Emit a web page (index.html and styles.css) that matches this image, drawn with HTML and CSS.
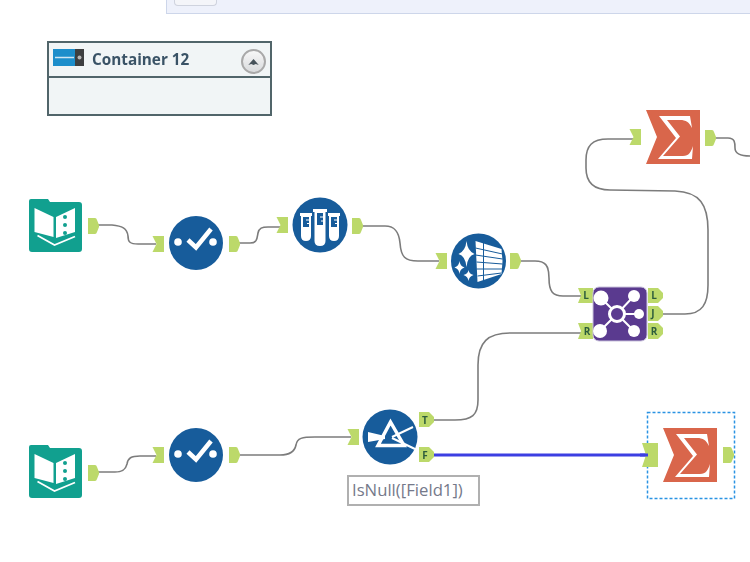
FILE: index.html
```html
<!DOCTYPE html>
<html lang="en">
<head>
<meta charset="utf-8">
<title>Workflow canvas</title>
<link rel="stylesheet" href="styles.css">
</head>
<body>
<div class="toolbar"><div class="toolbar-btn"></div></div>
<main class="canvas">
  <svg class="diagram" width="750" height="548" viewBox="0 14 750 548" xmlns="http://www.w3.org/2000/svg">
    <defs>
      <symbol id="pin" width="11" height="16" viewBox="0 0 11 16" overflow="visible"><path class="port" d="M-0.500,0H11V16H-0.500L3.500,8Z"/></symbol>
      <symbol id="pout" width="11" height="16" viewBox="0 0 11 16" overflow="visible"><path class="port" d="M0,0H7Q8.500,0 9,2L11,7V9L9,14Q8.500,16 7,16H0Z"/></symbol>
      <symbol id="book" width="53" height="53" viewBox="0 0 53 53">
        <path class="teal" d="M2,0H19L21,3H50Q53,3 53,6V50Q53,53 50,53H3Q0,53 0,50V2Q0,0 2,0Z"/>
        <path class="white" d="M5.500,9L24.500,18V38L5.500,33ZM27,18L46,9V33L27,39Z"/>
        <path class="book-line" d="M8.500,36.500L25.500,46L46,37.500"/>
        <circle class="teal" cx="36" cy="18" r="2"/><circle class="teal" cx="36" cy="26" r="2"/><circle class="teal" cx="36" cy="34" r="2"/>
      </symbol>
      <symbol id="select" width="54" height="54" viewBox="-27 -27 54 54">
        <circle class="blue" r="27"/>
        <circle class="white" cx="-18" cy="-1" r="3.800"/><circle class="white" cx="17" cy="-1" r="3.800"/>
        <path class="check" d="M-8,-3L0,4.500L15,-14"/>
      </symbol>
      <symbol id="sum" width="54" height="54" viewBox="0 0 54 54">
        <path class="orange" d="M0,0H54V54H0L11,27Z"/>
        <path class="white" d="M13,6H44L46,18C43,12 40,10 34,10H21L34,26.500L17,46H37C43,46 45,42 47,36L46,49H12L30,28Z"/>
      </symbol>
    </defs>

    <g class="wires">
      <path d="M98,225H112C122,226 127,228 128,236C128,242 130,244 138,244H156"/>
      <path d="M239,243H250C257,243 257,239 258,233C259,228 262,227 268,227H281"/>
      <path d="M363,226H385C395,226 399,232 400,243C401,257 405,261 418,261H439"/>
      <path d="M521,261H535C545,261 549,265 549,278C549,292 553,296 563,296H581"/>
      <path d="M434,420H455C472,420 478,415 478,400V365C478,342 488,333 510,333H581"/>
      <path d="M663,314H685C702,314 708,304 708,285V230C708,205 700,192 675,191L610,190C594,190 586,182 586,168V160C586,146 592,139 608,139H637"/>
      <path d="M716,138H728C735,138 735,143 735,148C735,154 740,156 750,156"/>
      <path d="M98,472H115C124,472 126,468 127,464C128,458 131,456 140,456H156"/>
      <path d="M239,455H280C292,455 295,450 296,445C297,438 302,437 315,437H351"/>
      <path class="wire-live" d="M433,455H648"/>
    </g>

    <use href="#book" x="29" y="199"/>
    <use href="#pout" x="88" y="218"/>
    <use href="#pin" x="153" y="236"/>
    <use href="#select" x="169" y="216"/>
    <use href="#pout" x="229" y="236"/>

    <use href="#pin" x="277" y="217"/>
    <g transform="translate(320 225)">
      <circle class="blue" r="27.500"/>
      <path class="white" d="M-7,-16H7V-13H5.500V16Q5.500,21 0,21Q-5.500,21 -5.500,16V-13H-7ZM-20,-12H-8V-9H-9V11Q-9,16 -14,16Q-19,16 -19,11V-9H-20ZM8,-12H20V-9H19V11Q19,16 14,16Q9,16 9,11V-9H8Z"/>
      <path class="blue" d="M-3,-12H3V0H-3ZM-17,-8H-11V2H-17ZM11,-8H17V2H11Z"/>
      <path class="tick" d="M0,-8H3M1,-4H3M-14,-5H-11M-13,-1.500H-11M14,-5H17M15,-1.500H17"/>
    </g>
    <use href="#pout" x="352" y="218"/>

    <use href="#pin" x="436" y="253"/>
    <g transform="translate(478.500 261)">
      <circle class="blue" r="27.500"/>
      <path class="white" d="M-3,-20L23,-12L24,0L23,13L-1,21Z"/>
      <path class="tick-strong" d="M-3,-13L24,-7M-3,-6L24,-2M-2,1L24,3M-2,8L24,8M-1,15L23,12M5,-18V20"/>
      <path class="white" d="M-12,-20Q-11,-10 -4,-7Q-11,-5 -12,6Q-13,-5 -20,-7Q-13,-10 -12,-20ZM-19,0Q-18.500,5 -14,6.500Q-18.500,8 -19,13Q-19.500,8 -24,6.500Q-19.500,5 -19,0ZM-10,9Q-9.500,13 -5,14Q-9.500,15.500 -10,20Q-10.500,15.500 -15,14Q-10.500,13 -10,9Z"/>
    </g>
    <use href="#pout" x="510" y="253"/>

    <path class="port" d="M578,288H593V303H578L581,295.500Z"/>
    <path class="port" d="M578,323H593V339H578L581,331Z"/>
    <path class="port" d="M648,288H658L663,293V298L658,303H648Z"/>
    <path class="port" d="M648,306H658L663,311V316L658,321H648Z"/>
    <path class="port" d="M648,323H658L663,328V334L658,339H648Z"/>
    <g class="port-text">
      <text x="586" y="299">L</text><text x="587" y="335">R</text>
      <text x="654" y="299">L</text><text x="653" y="317">J</text><text x="654" y="335">R</text>
    </g>
    <rect class="purple" x="593" y="287" width="54" height="54" rx="6"/>
    <path class="hub-lines" d="M601,298L617,314L634,296M617,314H639M600,331L617,314L634,331"/>
    <circle class="purple-fill" cx="617" cy="314" r="8"/>
    <circle class="hub" cx="617" cy="314" r="7.500"/>
    <circle class="white" cx="601" cy="298" r="7.500"/><circle class="white" cx="634" cy="296" r="6"/><circle class="white" cx="639" cy="314" r="5"/><circle class="white" cx="600" cy="331" r="7"/><circle class="white" cx="634" cy="331" r="6"/>

    <use href="#pin" x="630" y="129"/>
    <use href="#sum" x="646" y="110"/>
    <use href="#pout" x="705" y="130"/>

    <use href="#book" x="29" y="445"/>
    <use href="#pout" x="88" y="465"/>
    <use href="#pin" x="153" y="447"/>
    <use href="#select" x="169" y="428"/>
    <use href="#pout" x="229" y="447"/>

    <use href="#pin" x="348" y="429"/>
    <g transform="translate(390 437)">
      <circle class="blue" r="27.500"/>
      <path class="beam" d="M2,0L23,-10M2,1L25,12"/>
      <path class="white" d="M-22,-5L-5,-1V2L-22,5Z"/>
      <path class="prism" d="M0.500,-15L-12,8.500H14Z"/>
    </g>
    <path class="port" d="M419,412H429L434,417V422L429,427H419Z"/>
    <path class="port" d="M419,447H429L434,452V457L429,462H419Z"/>
    <g class="port-text"><text x="425" y="424">T</text><text x="425" y="459">F</text></g>

    <rect class="selection" x="647.500" y="412.500" width="87" height="86"/>
    <path class="port" d="M642,443H658V467H642L646,455Z"/>
    <path class="wire-live-cap" d="M640,455H648"/>
    <use href="#sum" x="663" y="428"/>
    <use href="#pout" x="723" y="447"/>
  </svg>

  <section class="container-tool">
    <header class="container-head">
      <svg class="container-icon" width="31" height="17" viewBox="0 0 31 17" xmlns="http://www.w3.org/2000/svg">
        <rect class="c-blue" width="23" height="17"/><rect class="c-dark" x="22" width="9" height="17"/>
        <path class="c-line" d="M2,8.500H21"/><circle class="c-dot" cx="26.500" cy="8.500" r="2"/>
      </svg>
      <span class="container-title">Container 12</span>
      <button class="collapse" type="button" aria-label="Collapse">
        <svg width="11" height="6" viewBox="0 0 14 8" xmlns="http://www.w3.org/2000/svg"><path class="c-chev" d="M0,8L7,0L14,8L10,6.500L7,8L4,6.500Z"/></svg>
      </button>
    </header>
    <div class="container-body"></div>
  </section>

  <div class="annotation">IsNull([Field1])</div>
</main>
</body>
</html>
```

FILE: styles.css
```css
html, body { margin: 0; padding: 0; width: 750px; height: 562px; overflow: hidden; background: #fff; }
body { font-family: "Open Sans", "Liberation Sans", sans-serif; }

.toolbar { margin-left: 166px; height: 13px; background: #eef1fb; border-left: 1px solid #cdd6ea; border-bottom: 1px solid #cdd6ea; padding-left: 7px; }
.toolbar-btn { width: 43px; height: 6px; box-sizing: border-box; background: #f4f5f9; border: 1px solid #cfd3de; border-top: 0; border-radius: 0 0 4px 4px; }

.canvas { position: relative; width: 750px; height: 548px; filter: blur(0.4px); }
.diagram { position: absolute; left: 0; top: 0; }

.wires path { fill: none; stroke: #7c7c7c; stroke-width: 1.600; }
.wires .wire-live, .wire-live-cap { fill: none; stroke: #3c3fe2; stroke-width: 3; }

.port { fill: #bcd96a; }
.teal { fill: #11a08f; }
.white { fill: #fff; }
.blue { fill: #175c9b; }
.orange { fill: #d9664b; }
.purple { fill: #5a3a8f; stroke: #c9c2dc; stroke-width: 1; }
.purple-fill { fill: #5a3a8f; }
.book-line { fill: none; stroke: #fff; stroke-width: 1.800; }
.check { fill: none; stroke: #fff; stroke-width: 4.500; }
.tick { fill: none; stroke: #fff; stroke-width: 1; }
.tick-strong { fill: none; stroke: #175c9b; stroke-width: 1; }
.beam { fill: none; stroke: #fff; stroke-width: 2; }
.prism { fill: none; stroke: #fff; stroke-width: 3.500; }
.hub-lines { fill: none; stroke: #fff; stroke-width: 2; }
.hub { fill: none; stroke: #fff; stroke-width: 3; }
.port-text text { font: 700 10px "Open Sans", sans-serif; fill: #2d5d3c; text-anchor: middle; }
.selection { fill: none; stroke: #2a93e3; stroke-width: 1.500; stroke-dasharray: 3 2; }

.container-tool { position: absolute; left: 47px; top: 27px; width: 225px; height: 75px; box-sizing: border-box; border: 2px solid #51656a; background: #f1f5f6; display: flex; flex-direction: column; }
.container-head { height: 33px; flex: none; display: flex; align-items: center; padding: 0 4px; border-bottom: 2px solid #51656a; }
.container-icon { flex: none; margin-top: -5px; }
.c-blue { fill: #1c8ecb; }
.c-dark { fill: #3d3f40; }
.c-line { stroke: #cfe6f3; stroke-width: 1.500; }
.c-dot { fill: #b5b5b5; }
.container-title { margin-left: 8px; margin-top: -2px; font-size: 15.300px; font-weight: 700; color: #3a5366; flex: 1; }
.collapse { width: 25px; height: 25px; padding: 0; flex: none; margin-top: 4px; border: 2px solid #a9a9a9; border-radius: 50%; background: linear-gradient(#f7f7f7, #d9dbdd); display: flex; align-items: center; justify-content: center; }
.c-chev { fill: #46525a; }
.container-body { flex: 1; }

.annotation { position: absolute; left: 347px; top: 461px; width: 133px; height: 31px; box-sizing: border-box; border: 2px solid #b0b0b0; background: #fff; color: #75798a; font-size: 16.700px; line-height: 26px; padding-left: 3px; white-space: nowrap; }
```
